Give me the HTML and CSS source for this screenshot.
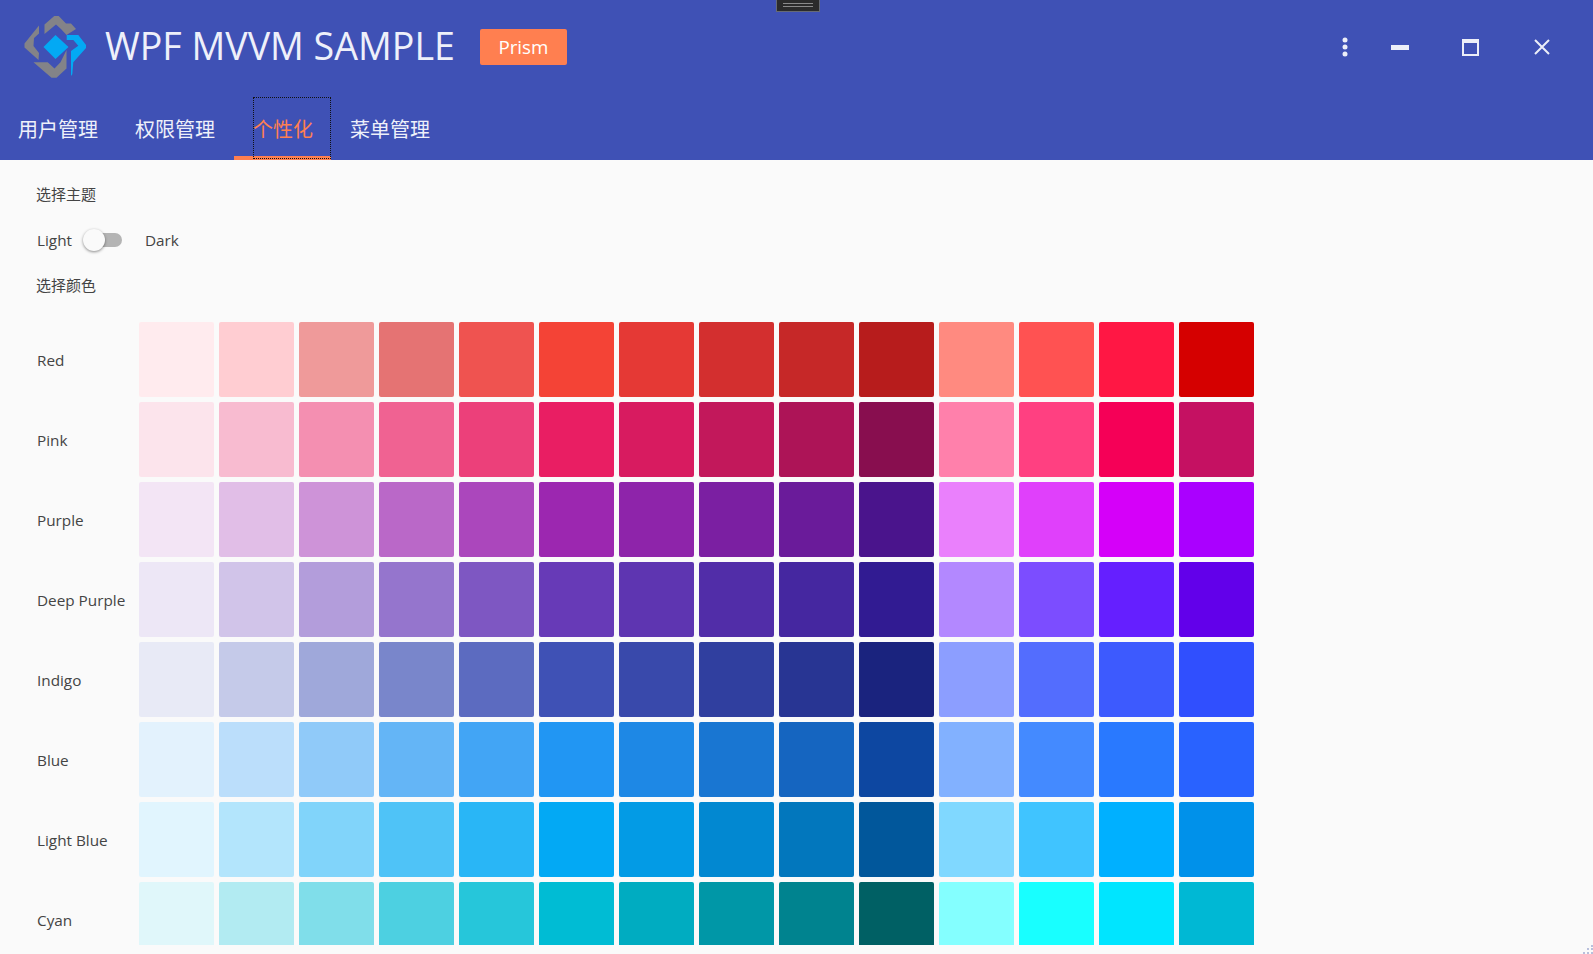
FILE: index.html
```html
<!DOCTYPE html>
<html lang="zh-CN">
<head>
<meta charset="utf-8">
<title>WPF MVVM SAMPLE</title>
<link rel="stylesheet" href="styles.css">
</head>
<body>
<div class="app">
  <header class="header">
    <div class="topbar">
      <svg class="logo" viewBox="24 16 62 62" width="62" height="62" aria-hidden="true">
        <g fill="#838388">
          <polygon points="44.5,24.5 54.5,15.8 58.5,15.8 66,23.5 71,23.5 76,29 66.5,35 61,29 56,24.5 44.5,34"/>
          <polygon points="39,25.5 39,33.5 34,38 33.5,46 39,53 38.5,60 24.5,47.5 24.5,43.5"/>
          <polygon points="33.5,62.3 47.7,62.3 54.5,68.5 60.5,62.3 66.5,50 66.5,68.5 56.5,77.7 51.5,77.7"/>
        </g>
        <g fill="#03a9f4">
          <polygon points="66.7,35 78.3,35 86,45 86,48 73.3,62.3 72.3,74.3 71,76 71,51 78.3,45.7 73.3,40 66.7,40"/>
          <polygon points="43.5,47 55.5,35 68.5,47 55.5,59"/>
        </g>
      </svg>
      <h1 class="title">WPF MVVM SAMPLE</h1>
      <span class="badge">Prism</span>
      <div class="winbtns">
        <button class="winbtn winbtn-menu" aria-label="menu">
          <svg viewBox="0 0 6 20" width="6" height="20"><circle cx="3" cy="3" r="2.5"/><circle cx="3" cy="10" r="2.5"/><circle cx="3" cy="17" r="2.5"/></svg>
        </button>
        <button class="winbtn" aria-label="minimize">
          <svg viewBox="0 0 18 5" width="18" height="5"><rect width="18" height="5"/></svg>
        </button>
        <button class="winbtn" aria-label="maximize">
          <svg viewBox="0 0 17 17" width="17" height="17"><path fill-rule="evenodd" d="M0 0H17V17H0ZM2 4V15H15V4Z"/></svg>
        </button>
        <button class="winbtn" aria-label="close">
          <svg viewBox="0 0 16 16" width="16" height="16"><path d="M1 1L15 15M15 1L1 15" fill="none" stroke="#eceef8" stroke-width="2"/></svg>
        </button>
      </div>
    </div>
    <nav class="tabs">
      <a class="tab">用户管理</a>
      <a class="tab">权限管理</a>
      <a class="tab tab-active"><span class="focus-rect"></span>个性化</a>
      <a class="tab">菜单管理</a>
    </nav>
  </header>

  <main class="content">
    <div class="section-title">选择主题</div>
    <div class="theme-row">
      <span class="theme-label">Light</span>
      <span class="toggle"><span class="toggle-thumb"></span></span>
      <span class="theme-label">Dark</span>
    </div>
    <div class="section-title section-title-color">选择颜色</div>

    <div class="palette">
      <div class="row"><span class="row-name">Red</span><div class="swatches">
        <i style="background:#FFEBEE"></i><i style="background:#FFCDD2"></i><i style="background:#EF9A9A"></i><i style="background:#E57373"></i><i style="background:#EF5350"></i><i style="background:#F44336"></i><i style="background:#E53935"></i><i style="background:#D32F2F"></i><i style="background:#C62828"></i><i style="background:#B71C1C"></i><i style="background:#FF8A80"></i><i style="background:#FF5252"></i><i style="background:#FF1744"></i><i style="background:#D50000"></i>
      </div></div>
      <div class="row"><span class="row-name">Pink</span><div class="swatches">
        <i style="background:#FCE4EC"></i><i style="background:#F8BBD0"></i><i style="background:#F48FB1"></i><i style="background:#F06292"></i><i style="background:#EC407A"></i><i style="background:#E91E63"></i><i style="background:#D81B60"></i><i style="background:#C2185B"></i><i style="background:#AD1457"></i><i style="background:#880E4F"></i><i style="background:#FF80AB"></i><i style="background:#FF4081"></i><i style="background:#F50057"></i><i style="background:#C51162"></i>
      </div></div>
      <div class="row"><span class="row-name">Purple</span><div class="swatches">
        <i style="background:#F3E5F5"></i><i style="background:#E1BEE7"></i><i style="background:#CE93D8"></i><i style="background:#BA68C8"></i><i style="background:#AB47BC"></i><i style="background:#9C27B0"></i><i style="background:#8E24AA"></i><i style="background:#7B1FA2"></i><i style="background:#6A1B9A"></i><i style="background:#4A148C"></i><i style="background:#EA80FC"></i><i style="background:#E040FB"></i><i style="background:#D500F9"></i><i style="background:#AA00FF"></i>
      </div></div>
      <div class="row"><span class="row-name">Deep Purple</span><div class="swatches">
        <i style="background:#EDE7F6"></i><i style="background:#D1C4E9"></i><i style="background:#B39DDB"></i><i style="background:#9575CD"></i><i style="background:#7E57C2"></i><i style="background:#673AB7"></i><i style="background:#5E35B1"></i><i style="background:#512DA8"></i><i style="background:#4527A0"></i><i style="background:#311B92"></i><i style="background:#B388FF"></i><i style="background:#7C4DFF"></i><i style="background:#651FFF"></i><i style="background:#6200EA"></i>
      </div></div>
      <div class="row"><span class="row-name">Indigo</span><div class="swatches">
        <i style="background:#E8EAF6"></i><i style="background:#C5CAE9"></i><i style="background:#9FA8DA"></i><i style="background:#7986CB"></i><i style="background:#5C6BC0"></i><i style="background:#3F51B5"></i><i style="background:#3949AB"></i><i style="background:#303F9F"></i><i style="background:#283593"></i><i style="background:#1A237E"></i><i style="background:#8C9EFF"></i><i style="background:#536DFE"></i><i style="background:#3D5AFE"></i><i style="background:#304FFE"></i>
      </div></div>
      <div class="row"><span class="row-name">Blue</span><div class="swatches">
        <i style="background:#E3F2FD"></i><i style="background:#BBDEFB"></i><i style="background:#90CAF9"></i><i style="background:#64B5F6"></i><i style="background:#42A5F5"></i><i style="background:#2196F3"></i><i style="background:#1E88E5"></i><i style="background:#1976D2"></i><i style="background:#1565C0"></i><i style="background:#0D47A1"></i><i style="background:#82B1FF"></i><i style="background:#448AFF"></i><i style="background:#2979FF"></i><i style="background:#2962FF"></i>
      </div></div>
      <div class="row"><span class="row-name">Light Blue</span><div class="swatches">
        <i style="background:#E1F5FE"></i><i style="background:#B3E5FC"></i><i style="background:#81D4FA"></i><i style="background:#4FC3F7"></i><i style="background:#29B6F6"></i><i style="background:#03A9F4"></i><i style="background:#039BE5"></i><i style="background:#0288D1"></i><i style="background:#0277BD"></i><i style="background:#01579B"></i><i style="background:#80D8FF"></i><i style="background:#40C4FF"></i><i style="background:#00B0FF"></i><i style="background:#0091EA"></i>
      </div></div>
      <div class="row"><span class="row-name">Cyan</span><div class="swatches">
        <i style="background:#E0F7FA"></i><i style="background:#B2EBF2"></i><i style="background:#80DEEA"></i><i style="background:#4DD0E1"></i><i style="background:#26C6DA"></i><i style="background:#00BCD4"></i><i style="background:#00ACC1"></i><i style="background:#0097A7"></i><i style="background:#00838F"></i><i style="background:#006064"></i><i style="background:#84FFFF"></i><i style="background:#18FFFF"></i><i style="background:#00E5FF"></i><i style="background:#00B8D4"></i>
      </div></div>
    </div>
  </main>
</div>

<div class="snap-handle"><span class="snap-lines"></span></div>
<svg class="grip" viewBox="0 0 10 9" width="10" height="9" aria-hidden="true">
  <g fill="#b9c0dc">
    <rect x="8" y="0" width="2" height="2"/>
    <rect x="4" y="3" width="2" height="2"/><rect x="8" y="3" width="2" height="2"/>
    <rect x="0" y="7" width="2" height="2"/><rect x="4" y="7" width="2" height="2"/><rect x="8" y="7" width="2" height="2"/>
  </g>
</svg>
</body>
</html>
```
FILE: styles.css
```css
* { box-sizing: border-box; }

html, body {
  margin: 0;
  height: 100%;
  overflow: hidden;
  background: #fafafa;
}

body {
  font-family: "Open Sans", "Noto Sans CJK SC", sans-serif;
  color: #444;
}

.app {
  display: flex;
  flex-direction: column;
  height: 945px;
}

.header {
  flex: none;
  height: 160px;
  background: #3f51b5;
  color: #eef0fa;
}

.topbar {
  display: flex;
  align-items: center;
  height: 97px;
  padding: 0 16px 3px 24px;
}

.logo { flex: none; }

.title {
  margin: -2px 0 0 19px;
  font-size: 37.6px;
  font-weight: 400;
  line-height: 48px;
  white-space: nowrap;
}

.badge {
  display: flex;
  align-items: center;
  justify-content: center;
  width: 87px;
  height: 36px;
  margin-left: 25px;
  border-radius: 2px;
  background: #ff7f50;
  color: #fff;
  font-size: 18.8px;
  font-weight: 400;
}

.winbtns {
  display: flex;
  align-items: center;
  margin-left: auto;
}

.winbtn {
  display: flex;
  align-items: center;
  justify-content: center;
  width: 71px;
  height: 40px;
  padding: 0;
  border: 0;
  background: none;
  fill: #eceef8;
}

.winbtn-menu { width: 38px; }

.tabs {
  display: flex;
  height: 63px;
  margin-left: -1px;
}

.tab {
  position: relative;
  display: flex;
  align-items: center;
  padding: 0 18px 0 19px;
  font-family: "Noto Sans CJK SC", sans-serif;
  font-size: 20px;
  line-height: 28px;
  white-space: nowrap;
}

.tab-active {
  margin-left: 1px;
  color: #ff7f50;
  box-shadow: inset 0 -4px 0 #ff7f50;
}

.focus-rect {
  position: absolute;
  left: 19px;
  right: 0;
  top: 0;
  bottom: 1px;
  border: 1px dotted #111;
}

.content {
  flex: 1;
  min-height: 0;
  overflow: hidden;
  padding: 0 0 0 36px;
}

.section-title {
  margin-top: 24px;
  font-family: "Noto Sans CJK SC", sans-serif;
  font-size: 15px;
  line-height: 20px;
}

.section-title-color { margin-top: 22px; }

.theme-row {
  display: flex;
  align-items: center;
  height: 26px;
  margin-top: 23px;
  padding-left: 1px;
  font-size: 15.3px;
}

.theme-label { line-height: 20px; }

.toggle {
  position: relative;
  width: 36px;
  height: 14px;
  margin-left: 14px;
  margin-right: 23px;
  border-radius: 7px;
  background: #b4b4b4;
}

.toggle-thumb {
  position: absolute;
  left: -3px;
  top: -4px;
  width: 22px;
  height: 22px;
  border-radius: 50%;
  background: #fafafa;
  box-shadow: 0 1px 3px rgba(0, 0, 0, 0.45);
}

.palette {
  display: flex;
  flex-direction: column;
  gap: 5px;
  margin-top: 27px;
}

.row {
  display: flex;
  align-items: center;
  flex: none;
  height: 75px;
}

.row-name {
  flex: none;
  width: 103px;
  padding-left: 1px;
  font-size: 15.3px;
  line-height: 20px;
}

.swatches {
  display: flex;
  gap: 5px;
}

.swatches i {
  display: block;
  width: 75px;
  height: 75px;
  border-radius: 2px;
}

.snap-handle {
  position: absolute;
  left: 776px;
  top: 0;
  display: flex;
  justify-content: center;
  width: 44px;
  height: 12px;
  padding-top: 3px;
  background: #2b2b2b;
  border: 1px solid #666a75;
  border-top: 0;
}

.snap-lines {
  width: 30px;
  height: 4px;
  border-top: 1px solid #8a8a8a;
  border-bottom: 1px solid #8a8a8a;
}

.grip {
  position: absolute;
  right: 0;
  bottom: 0;
}
```
